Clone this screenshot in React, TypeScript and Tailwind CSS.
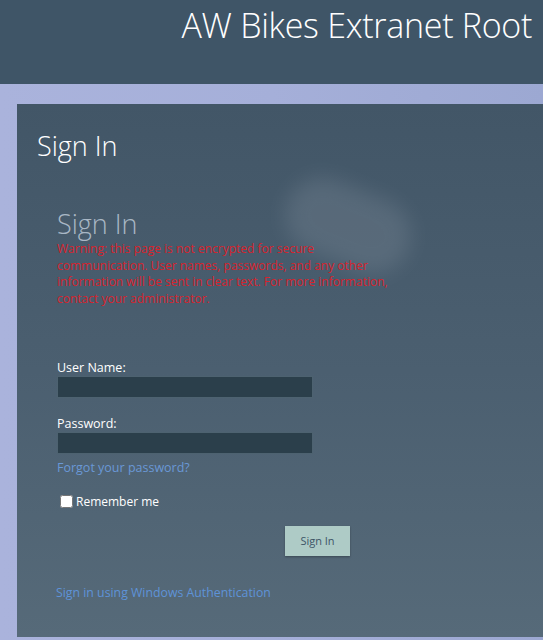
import React, {useState} from 'react';

const App = () => {
 const [remember, setRemember] = useState(false);

 return (
  <div className="w-[543px] h-[640px] flex flex-col bg-gradient-to-b from-[#a9b3dc] to-[#e1e7f2] font-['Open_Sans',sans-serif] overflow-hidden">
   {/* header */}
   <div className="h-[84px] shrink-0 bg-[#3f5567] flex justify-end pr-[11px]">
    <h1 className="text-[34px] font-light text-white leading-none mt-[8px] tracking-[-0.3px]">AW Bikes Extranet Root</h1>
   </div>

   {/* band + panel */}
   <div className="flex-1 flex flex-col pt-[20px] pl-[17px] pb-[3px] bg-gradient-to-r from-[#aab3dc] via-[#a5afd9] to-[#9ca8d2]">
    <div className="relative flex-1 bg-gradient-to-b from-[#425667] via-[#4b5f70] to-[#566a79] overflow-hidden">
     {/* blurred glare */}
     <div className="absolute left-[266px] top-[84px] w-[130px] h-[75px] rounded-full bg-[#8d99a6] opacity-25 blur-[10px] rotate-[22deg]" />

     <div className="relative px-[20px] pt-[24px]">
      <h2 className="text-[27px] font-light text-white leading-[36px]">Sign In</h2>

      <div className="pl-[20px] mt-[43px]">
       <h3 className="text-[27px] font-light text-[#a9b7c5] leading-[34px]">Sign In</h3>
       <p className="text-[12px] leading-[16.5px] text-[#d7232d] w-[340px]">
        Warning: this page is not encrypted for secure communication. User names, passwords, and any other information will be sent in clear text. For more information, contact your administrator.
       </p>

       <div className="mt-[54px] flex flex-col w-[256px]">
        <label htmlFor="user" className="text-[12.5px] font-medium text-white leading-[14px]">User Name:</label>
        <input id="user" type="text" className="mt-[1px] h-[22px] w-full bg-[#2b3f4b] border border-[#4d6270] outline-none text-white text-[12px] px-1" />

        <label htmlFor="pass" className="mt-[19px] text-[12.5px] font-medium text-white leading-[14px]">Password:</label>
        <input id="pass" type="password" className="mt-[1px] h-[22px] w-full bg-[#2b3f4b] border border-[#4d6270] outline-none text-white text-[12px] px-1" />

        <a href="#" className="mt-[5px] text-[12.5px] text-[#6a98d6] leading-[17px]">Forgot your password?</a>
       </div>

       <label className="mt-[17px] flex items-center gap-[3px] text-[12px] text-white leading-[17px] pl-[3px]">
        <input type="checkbox" checked={remember} onChange={e => setRemember(e.target.checked)} className="w-[13px] h-[13px] m-0 accent-white" />
        Remember me
       </label>

       <div className="mt-[16px] flex pl-[228px]">
        <button type="button" className="w-[65px] h-[30px] bg-[#aecbc6] text-[#3d5566] text-[11px] shadow-[0_1px_2px_rgba(0,0,0,0.3)]">Sign In</button>
       </div>

       <a href="#" className="block mt-[28px] -ml-[1px] text-[12.3px] text-[#5e93d8] leading-[17px]">Sign in using Windows Authentication</a>
      </div>
     </div>
    </div>
   </div>
  </div>
 );
};

export default App;
